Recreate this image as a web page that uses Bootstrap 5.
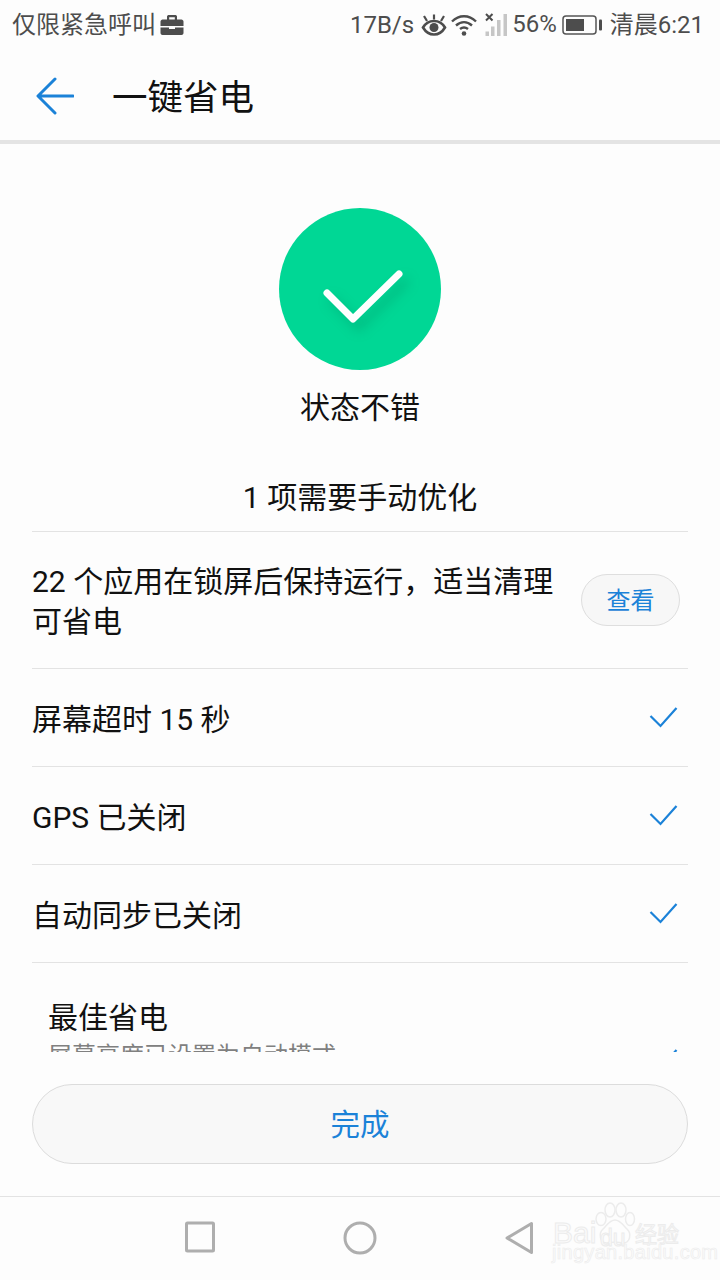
<!DOCTYPE html>
<html lang="zh-CN">
<head>
  <meta charset="UTF-8" />
  <meta name="viewport" content="width=device-width, initial-scale=1.0" />
  <title>一键省电</title>
  <link href="https://cdn.jsdelivr.net/npm/bootstrap@5.3.3/dist/css/bootstrap.min.css" rel="stylesheet">
  <style>
    html, body { height: 1280px; overflow: hidden; }
    body { font-family: Roboto, "Noto Sans CJK SC", sans-serif; background: #fdfdfd; color: #111; }
    .screen { height: 1280px; position: relative; }

    .status-bar { height: 50px; padding: 0 16px 0 12px; color: #4d4d4d; font-size: 24px; line-height: 1; }
    .status-bar svg { display: block; }
    .pct-text { margin: -3px 0 0 3px; }
    .batt-icon { margin-left: 5px; }
    .eye-icon { margin-left: 7px; }

    .title-bar { height: 94px; padding-left: 36px; border-bottom: 4px solid #e4e4e4; }
    .title-bar svg { margin-top: 2px; }
    .title-bar h1 { font-size: 35.5px; font-weight: 400; margin: 6px 0 0 38px; color: #111; }

    .content { height: 908px; overflow: hidden; padding: 0 32px; }
    .ok-circle { width: 162px; height: 162px; margin-top: 64px; background: #00d795; border-radius: 50%; }
    .ok-check { filter: drop-shadow(6px 8px 6px rgba(0, 110, 75, .28)); }
    .ok-label { font-size: 30px; line-height: 44px; margin-top: 16px; }
    .todo-title { font-size: 30px; line-height: 44px; margin-top: 46px; height: 55px; }

    .opt-list { --bs-list-group-bg: transparent; --bs-list-group-border-color: #e3e3e3; --bs-list-group-color: #111; border-top: 1px solid #e3e3e3; border-radius: 0; }
    .opt-row { font-size: 30px; line-height: 40px; height: 98px; padding: 0 10px 0 0; display: flex; align-items: center; justify-content: space-between; }
    .opt-row.tall { height: 137px; }
    .opt-row .wrap-text { width: 530px; padding-top: 4px; }
    .opt-text { padding-top: 4px; }
    .view-btn { width: 99px; height: 52px; padding: 2px 0 0; font-size: 24px; color: #1b82d8; background: #f7f7f7; border: 1px solid #dedede; margin-right: -2px; }
    .opt-row.clipped { display: block; height: 110px; padding: 35px 0 0 16px; border: 0; position: relative; }
    .opt-row.clipped .sub-text { font-size: 24px; line-height: 34px; margin-top: 1px; color: #808080; }
    .opt-row.clipped svg { position: absolute; right: 10px; top: 84px; }

    .done-wrap { height: 144px; padding: 32px 32px 0; }
    .done-btn { height: 80px; padding: 2px 0 0; font-size: 29.5px; color: #1b82d8; background: #f8f8f8; border: 1px solid #dcdcdc; }

    .nav-keys { height: 84px; border-top: 1px solid #e3e3e3; }
    .nav-slot { position: absolute; top: 1221px; }

    .baidu-mark { position: absolute; left: 540px; top: 1196px; width: 180px; height: 84px; color: #fbfbfb; -webkit-text-stroke: 1px #ececec; font-family: "Liberation Sans", sans-serif; }
    .baidu-mark span { position: absolute; white-space: nowrap; }
    .baidu-word { left: 13px; top: 24px; font-size: 30px; line-height: 26px; }
    .baidu-du { left: 60px; top: 34px; font-size: 23px; line-height: 16px; }
    .baidu-cn { left: 95px; top: 24px; font-size: 22px; line-height: 24px; font-family: "Noto Sans CJK SC", sans-serif; }
    .baidu-url { left: 12px; top: 50px; font-size: 20px; line-height: 12px; letter-spacing: .3px; -webkit-text-stroke-width: .6px; }
    .baidu-paw { position: absolute; left: 54px; top: 6px; }
  </style>
</head>
<body>
<div class="screen d-flex flex-column">

  <!-- status bar -->
  <div class="status-bar d-flex align-items-center justify-content-between">
    <div class="d-flex align-items-center gap-1">
      <span>仅限紧急呼叫</span>
      <svg width="24" height="22" viewBox="0 0 24 22"><path d="M7 6V2.500C7 1.500 8 1 9 1h6c1 0 2 .5 2 1.500V6h-2.200V3.200H9.200V6z" fill="#4d4d4d"/><path d="M2.500 5.500h19c1 0 2 1 2 2v4.500H.5V7.500c0-1 1-2 2-2zM.5 13.500h8.500V15h6v-1.500h8.500V19c0 1-1 2-2 2h-19c-1 0-2-1-2-2z" fill="#4d4d4d"/></svg>
    </div>
    <div class="d-flex align-items-center">
      <span>17B/s</span>
      <svg class="eye-icon" width="26" height="22" viewBox="0 0 26 22"><path d="M2 13.500C5 8.500 9 7 13 7s8 1.500 11 6.500C21 18.500 17 20.500 13 20.500S5 18.500 2 13.500z" fill="none" stroke="#4d4d4d" stroke-width="2.600"/><circle cx="13" cy="13.500" r="4.500" fill="#4d4d4d"/><path d="M3 2l3 5M23 2l-3 5M13 .5v5" stroke="#4d4d4d" stroke-width="2.200"/></svg>
      <svg class="ms-1" width="26" height="22" viewBox="0 0 26 22"><path d="M1 7.500c7-7 17-7 24 0M5 11.500c5-4.500 11-4.500 16 0M9 15c2.500-2 5.500-2 8 0" fill="none" stroke="#4d4d4d" stroke-width="2.400"/><circle cx="13" cy="19.500" r="2.300" fill="#4d4d4d"/></svg>
      <svg class="ms-2" width="24" height="24" viewBox="0 0 24 24"><path d="M1 1l6.500 6.500M7.500 1L1 7.500" stroke="#4d4d4d" stroke-width="2"/><path d="M.5 18.500H4V23H.5zM6 13.500h3.500V23H6zM12 7h3.500v16H12zM18.500 1H22v22h-3.500z" fill="#c6c6c6"/></svg>
      <span class="pct-text">56%</span>
      <svg class="batt-icon" width="40" height="20" viewBox="0 0 40 20"><rect x="1" y="1" width="33" height="18" rx="3" fill="none" stroke="#555" stroke-width="1.500"/><rect x="4" y="4" width="18" height="12" fill="#4d4d4d"/><rect x="37" y="4.500" width="3" height="11" rx="1" fill="#4d4d4d"/></svg>
      <span class="ms-2">清晨6:21</span>
    </div>
  </div>

  <!-- title -->
  <div class="title-bar d-flex align-items-center">
    <svg width="38" height="38" viewBox="0 0 38 38"><path d="M37 19H3M19 2L2 19l17 17" fill="none" stroke="#1b82d8" stroke-width="3" stroke-linecap="round" stroke-linejoin="round"/></svg>
    <h1>一键省电</h1>
  </div>

  <!-- scrolling content -->
  <div class="content">
    <div class="d-flex flex-column align-items-center">
      <div class="ok-circle d-flex align-items-center justify-content-center">
        <svg class="ok-check" width="162" height="162" viewBox="0 0 162 162">
          <path d="M48 85l26 26 46-45" fill="none" stroke="#fff" stroke-width="7" stroke-linecap="round" stroke-linejoin="round"/>
        </svg>
      </div>
      <div class="ok-label">状态不错</div>
      <div class="todo-title">1 项需要手动优化</div>
    </div>

    <div class="list-group list-group-flush opt-list">
      <div class="list-group-item opt-row tall">
        <div class="wrap-text">22 个应用在锁屏后保持运行，适当清理可省电</div>
        <button class="btn rounded-pill view-btn" type="button">查看</button>
      </div>
      <div class="list-group-item opt-row">
        <span class="opt-text">屏幕超时 15 秒</span>
        <svg width="30" height="24" viewBox="0 0 30 24"><path d="M2.500 10l10 10L28.500 2" fill="none" stroke="#1b82d8" stroke-width="2.200"/></svg>
      </div>
      <div class="list-group-item opt-row">
        <span class="opt-text">GPS 已关闭</span>
        <svg width="30" height="24" viewBox="0 0 30 24"><path d="M2.500 10l10 10L28.500 2" fill="none" stroke="#1b82d8" stroke-width="2.200"/></svg>
      </div>
      <div class="list-group-item opt-row">
        <span class="opt-text">自动同步已关闭</span>
        <svg width="30" height="24" viewBox="0 0 30 24"><path d="M2.500 10l10 10L28.500 2" fill="none" stroke="#1b82d8" stroke-width="2.200"/></svg>
      </div>
      <div class="list-group-item opt-row clipped">
        <div>最佳省电</div>
        <div class="sub-text">屏幕亮度已设置为自动模式</div>
        <svg width="30" height="24" viewBox="0 0 30 24"><path d="M2.500 11l10 10L28.500 3" fill="none" stroke="#1b82d8" stroke-width="2.200"/></svg>
      </div>
    </div>
  </div>

  <!-- done button -->
  <div class="done-wrap">
    <button class="btn rounded-pill w-100 done-btn" type="button">完成</button>
  </div>

  <!-- navigation keys -->
  <div class="nav-keys">
    <svg class="nav-slot" style="left:185px" width="30" height="32" viewBox="0 0 30 32"><rect x="1.500" y="2" width="27" height="28" rx="1" fill="none" stroke="#aeaeae" stroke-width="3"/></svg>
    <svg class="nav-slot" style="left:343px" width="34" height="34" viewBox="0 0 34 34"><circle cx="17" cy="17" r="15" fill="none" stroke="#aeaeae" stroke-width="3"/></svg>
    <svg class="nav-slot" style="left:504px" width="30" height="34" viewBox="0 0 30 34"><path d="M27.500 2.500v29L3 17z" fill="none" stroke="#aeaeae" stroke-width="3" stroke-linejoin="round"/></svg>
  </div>

  <!-- watermark -->
  <div class="baidu-mark">
    <svg class="baidu-paw" width="42" height="46" viewBox="0 0 42 46"><g fill="none" stroke="#ececec" stroke-width="1.500"><ellipse cx="7" cy="17" rx="5" ry="6.500"/><ellipse cx="16" cy="8" rx="5" ry="7"/><ellipse cx="27" cy="8" rx="5" ry="7"/><ellipse cx="36" cy="17" rx="4.500" ry="6.500"/><path d="M21 18c5 0 8 5 12 9 5 5 3 14-4 14-3 0-5-1-8-1s-5 1-8 1c-7 0-9-9-4-14 4-4 7-9 12-9z"/></g></svg>
    <span class="baidu-word">Bai</span>
    <span class="baidu-du">du</span>
    <span class="baidu-cn">经验</span>
    <span class="baidu-url">jingyan.baidu.com</span>
  </div>
</div>
</body>
</html>
